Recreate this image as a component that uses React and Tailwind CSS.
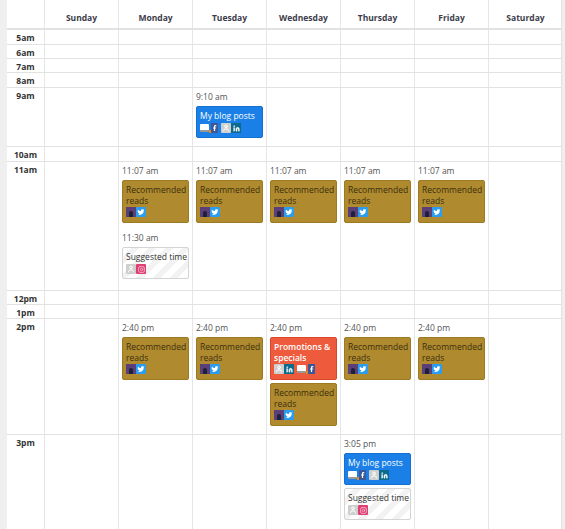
import { Linkedin, Twitter, Instagram, Facebook, User } from 'lucide-react';

const font = { fontFamily: '"Open Sans", sans-serif' };
const days = ['Sunday', 'Monday', 'Tuesday', 'Wednesday', 'Thursday', 'Friday', 'Saturday'];

function Avatar() {
  return (
    <span className="flex h-[10px] w-[10px] items-end justify-center bg-[#5b3f78]">
      <span className="h-[6px] w-[4px] rounded-t-sm bg-[#1d2238]" />
    </span>
  );
}

function TwitterIcon() {
  return (
    <span className="flex h-[10px] w-[10px] items-center justify-center rounded-[1px] bg-[#2a9df0]">
      <Twitter size={8} className="fill-white text-white" strokeWidth={0} />
    </span>
  );
}

function GrayUser() {
  return (
    <span className="flex h-[10px] w-[10px] items-center justify-center rounded-[1px] bg-[#cfcfcf]">
      <User size={8} className="text-white" strokeWidth={3} />
    </span>
  );
}

function InstaIcon() {
  return (
    <span className="flex h-[10px] w-[10px] items-center justify-center rounded-[1px] bg-[#df3f73]">
      <Instagram size={7} className="text-[#f7c4d4]" strokeWidth={2.5} />
    </span>
  );
}

function LinkedinIcon() {
  return (
    <span className="flex h-[10px] w-[10px] items-center justify-center bg-[#0c6a8c]">
      <Linkedin size={7} className="fill-white text-white" strokeWidth={1} />
    </span>
  );
}

function Blog() {
  return (
    <span className="flex h-[10px] items-center">
      <span className="h-[8px] w-[9px] rounded-[1px] border-b-2 border-[#9a9a9a] bg-white" />
      <span className="h-[3px] w-[2px] self-end bg-[#e08a2c]" />
      <span className="flex h-[10px] w-[7px] items-center justify-center bg-[#3b5998]">
        <Facebook size={8} className="fill-white text-white" strokeWidth={0} />
      </span>
    </span>
  );
}

function Icons({ kind }) {
  if (kind === 'rec') {
    return <div className="flex h-[10px]"><Avatar /><TwitterIcon /></div>;
  }
  if (kind === 'sug') {
    return <div className="flex h-[10px]"><GrayUser /><InstaIcon /></div>;
  }
  if (kind === 'blog') {
    return (
      <div className="flex h-[10px] gap-[3px]">
        <Blog />
        <div className="flex"><GrayUser /><LinkedinIcon /></div>
      </div>
    );
  }
  return (
    <div className="flex h-[10px] gap-[3px]">
      <div className="flex"><GrayUser /><LinkedinIcon /></div>
      <Blog />
    </div>
  );
}

function Card({ type }) {
  if (type === 'rec') {
    return (
      <div className="h-[43px] w-[67px] rounded-[2px] border border-[#9c7a22] bg-[#b08a2e] pl-[3px] pt-[3px] text-[8.5px] leading-[11px] text-[#3a2f10]">
        <div>Recommended reads</div>
        <div className="mt-[1px]"><Icons kind="rec" /></div>
      </div>
    );
  }
  if (type === 'blog') {
    return (
      <div className="h-[32px] w-[67px] rounded-[2px] border border-[#1670d0] bg-[#1a7fe6] pl-[3px] pt-[3px] text-[8.5px] leading-[11px] text-white">
        <div>My blog posts</div>
        <div className="mt-[2px]"><Icons kind="blog" /></div>
      </div>
    );
  }
  if (type === 'promo') {
    return (
      <div className="h-[43px] w-[67px] rounded-[2px] border border-[#d9482c] bg-[#ee5a3c] pl-[3px] pt-[3px] text-[8.5px] font-semibold leading-[11px] text-white">
        <div>Promotions & specials</div>
        <div className="mt-[1px]"><Icons kind="promo" /></div>
      </div>
    );
  }
  return (
    <div className="h-[32px] w-[67px] rounded-[2px] border border-[#d4d4d4] bg-[repeating-linear-gradient(135deg,#ffffff,#ffffff_6px,#f2f2f2_6px,#f2f2f2_12px)] pl-[3px] pt-[3px] text-[8.5px] leading-[11px] text-[#333333]">
      <div>Suggested time</div>
      <div className="mt-[2px]"><Icons kind="sug" /></div>
    </div>
  );
}

function Time({ children }) {
  return <div className="mb-[3px] h-[12px] text-[8.5px] leading-[12px] text-[#555555]">{children}</div>;
}

function Cell({ children, pad }) {
  return (
    <div className={`h-full border-l border-[#e6e6e6] pl-[3px] ${pad || ''}`}>
      {children}
    </div>
  );
}

function Row({ label, height, cells = {} }) {
  return (
    <div className="grid grid-cols-[37px_repeat(7,74px)] border-b border-[#e2e2e2]" style={{ height }}>
      <div className="pt-[2px] text-center text-[8.5px] font-bold leading-[11px] text-[#333333]">{label}</div>
      {days.map((d) => (
        <Cell key={d}>{cells[d]}</Cell>
      ))}
    </div>
  );
}

const rec = (time) => (
  <div className="pt-[3px]">
    <Time>{time}</Time>
    <Card type="rec" />
  </div>
);

const rows = [
  { label: '5am', height: 15 },
  { label: '6am', height: 14 },
  { label: '7am', height: 14 },
  { label: '8am', height: 15 },
  {
    label: '9am',
    height: 59,
    cells: {
      Tuesday: (
        <div className="pt-[3px]">
          <Time>9:10 am</Time>
          <Card type="blog" />
        </div>
      ),
    },
  },
  { label: '10am', height: 15 },
  {
    label: '11am',
    height: 129,
    cells: {
      Monday: (
        <div className="pt-[3px]">
          <Time>11:07 am</Time>
          <Card type="rec" />
          <div className="mt-[9px]">
            <Time>11:30 am</Time>
            <Card type="sug" />
          </div>
        </div>
      ),
      Tuesday: rec('11:07 am'),
      Wednesday: rec('11:07 am'),
      Thursday: rec('11:07 am'),
      Friday: rec('11:07 am'),
    },
  },
  { label: '12pm', height: 14 },
  { label: '1pm', height: 14 },
  {
    label: '2pm',
    height: 116,
    cells: {
      Monday: rec('2:40 pm'),
      Tuesday: rec('2:40 pm'),
      Wednesday: (
        <div className="pt-[3px]">
          <Time>2:40 pm</Time>
          <Card type="promo" />
          <div className="mt-[3px]"><Card type="rec" /></div>
        </div>
      ),
      Thursday: rec('2:40 pm'),
      Friday: rec('2:40 pm'),
    },
  },
  {
    label: '3pm',
    height: 95,
    cells: {
      Thursday: (
        <div className="pt-[3px]">
          <Time>3:05 pm</Time>
          <Card type="blog" />
          <div className="mt-[3px]"><Card type="sug" /></div>
        </div>
      ),
    },
  },
];

export default function App() {
  return (
    <div className="h-[529px] w-[565px] overflow-hidden bg-[#efefef] pl-[7px]" style={font}>
      <div className="h-full w-[555px] border-r border-[#e2e2e2] bg-white">
        <div className="grid h-[30px] grid-cols-[37px_repeat(7,74px)] border-b-2 border-[#e2e2e2]">
          <div />
          {days.map((d) => (
            <div key={d} className="border-l border-[#e6e6e6] pt-[12px] text-center text-[8.5px] font-bold leading-[12px] text-[#3d3d4a]">
              {d}
            </div>
          ))}
        </div>
        {rows.map((r) => (
          <Row key={r.label} {...r} />
        ))}
      </div>
    </div>
  );
}
